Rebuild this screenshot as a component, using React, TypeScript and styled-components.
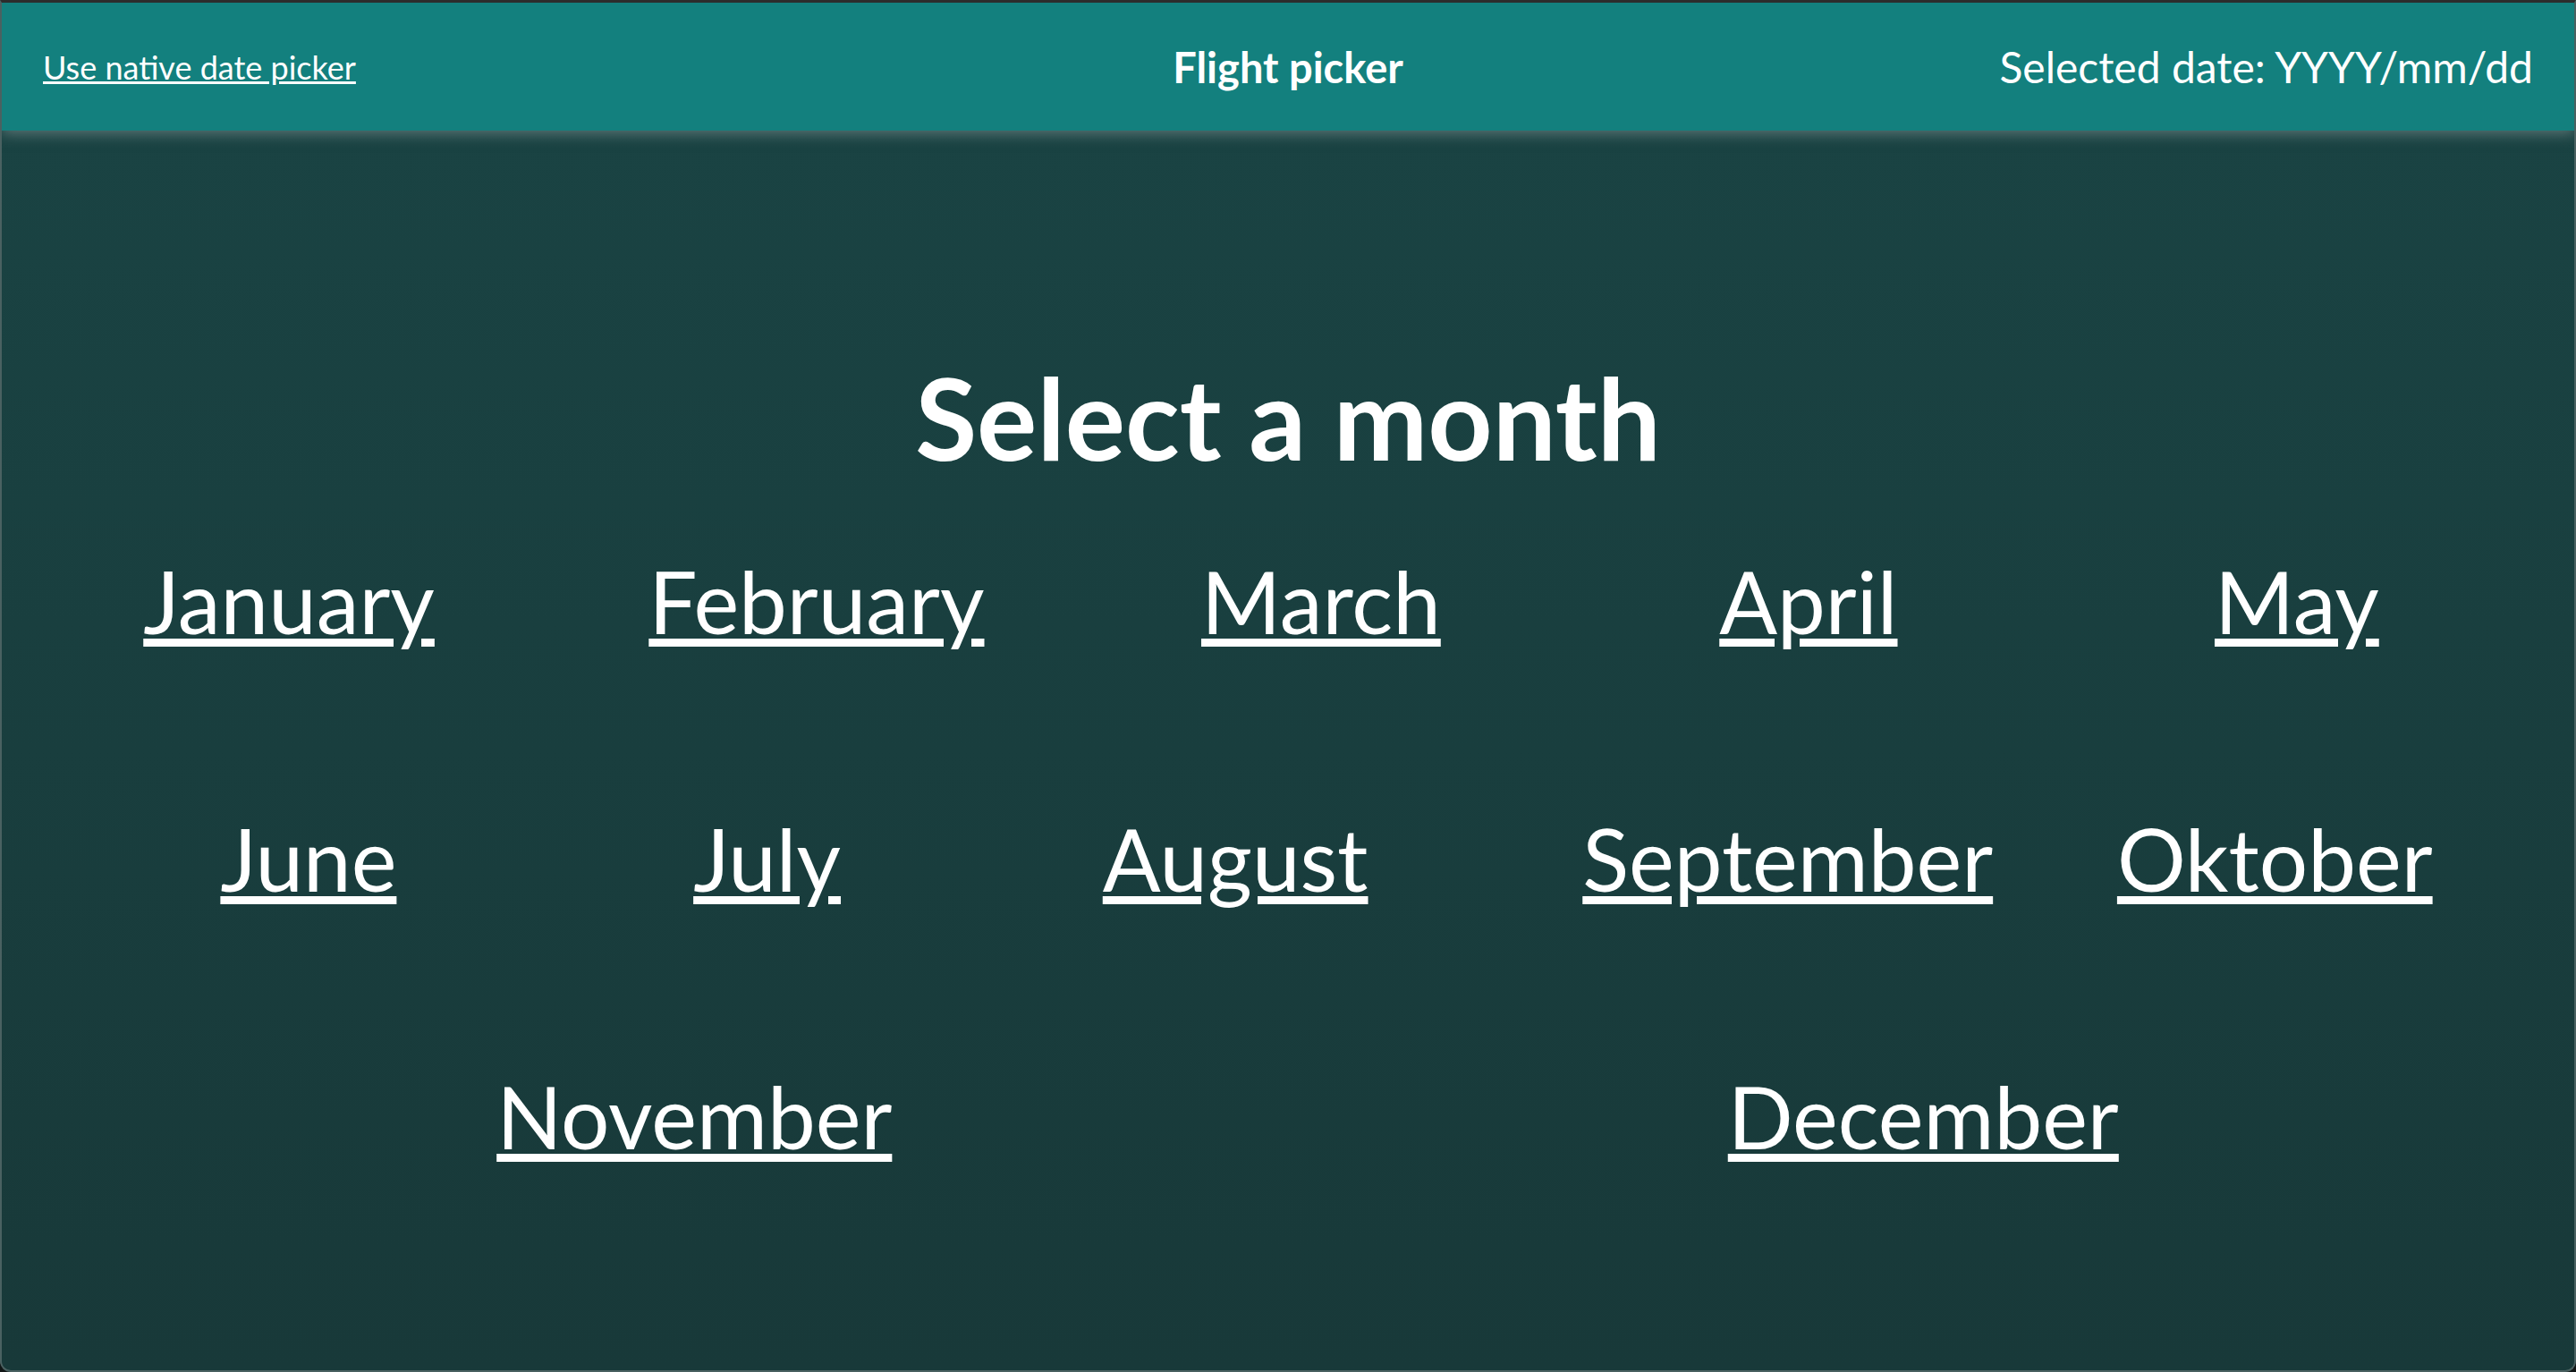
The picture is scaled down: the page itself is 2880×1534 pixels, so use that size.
import styled, { createGlobalStyle } from "styled-components";

const GlobalStyle = createGlobalStyle`
	html, body {
		margin: 0;
		padding: 0;
		background: #111616;
	}
	body {
		font-family: Lato, "Open Sans", sans-serif;
		color: #ffffff;
	}
`;

const Frame = styled.div`
	display: flex;
	flex-direction: column;
	box-sizing: border-box;
	height: 100vh;
	overflow: hidden;
	border: 2px solid #4a6161;
	border-top: 3px solid #2c2c2c;
	border-radius: 0 0 12px 12px;
	background: linear-gradient(180deg, #1a4444 0%, #183939 100%);
`;

const TopBar = styled.header`
	position: relative;
	z-index: 1;
	display: grid;
	grid-template-columns: 1fr auto 1fr;
	align-items: center;
	height: 143px;
	padding: 0 46px;
	background: #13807e;
	box-shadow: 0 4px 14px rgba(140, 155, 155, 0.55);
`;

const NativeLink = styled.a`
	justify-self: start;
	font-size: 36px;
	color: #ffffff;
	text-decoration: underline;
	cursor: pointer;
`;

const BarTitle = styled.div`
	font-size: 47px;
	font-weight: 700;
`;

const SelectedDate = styled.div`
	justify-self: end;
	font-size: 48px;
`;

const Main = styled.main`
	display: flex;
	flex-direction: column;
	padding-top: 245px;
`;

const Heading = styled.h1`
	margin: 0 0 72px;
	font-size: 126px;
	font-weight: 700;
	line-height: normal;
	text-align: center;
`;

const MonthGrid = styled.div`
	display: flex;
	flex-direction: column;
	gap: 173px;
`;

const MonthRow = styled.div`
	display: flex;
	justify-content: space-around;
	padding: 0 46px;
`;

const MonthLink = styled.a<{ $drift: number }>`
	font-size: 96px;
	line-height: normal;
	color: #ffffff;
	text-decoration: underline;
	cursor: pointer;
	transform: translateX(${(p) => p.$drift}px);
`;

// months drift sideways a little, the "flight" part of the picker
const monthRows = [
	[["January", -31], ["February", -78], ["March", -122], ["April", -97], ["May", -29]],
	[["June", 67], ["July", 136], ["August", 166], ["September", 143], ["Oktober", 19]],
	[["November", 31], ["December", 13]],
] as [string, number][][];

function App()
{
	return (<>
		<GlobalStyle />
		<Frame>
			<TopBar>
				<NativeLink>Use native date picker</NativeLink>
				<BarTitle>Flight picker</BarTitle>
				<SelectedDate>Selected date: YYYY/mm/dd</SelectedDate>
			</TopBar>
			<Main>
				<Heading>Select a month</Heading>
				<MonthGrid>
					{monthRows.map((row, r) => (
						<MonthRow key={r}>
							{row.map(([name, drift]) => (
								<MonthLink key={name} $drift={drift}>{name}</MonthLink>
							))}
						</MonthRow>
					))}
				</MonthGrid>
			</Main>
		</Frame>
	</>);
}

export default App;
